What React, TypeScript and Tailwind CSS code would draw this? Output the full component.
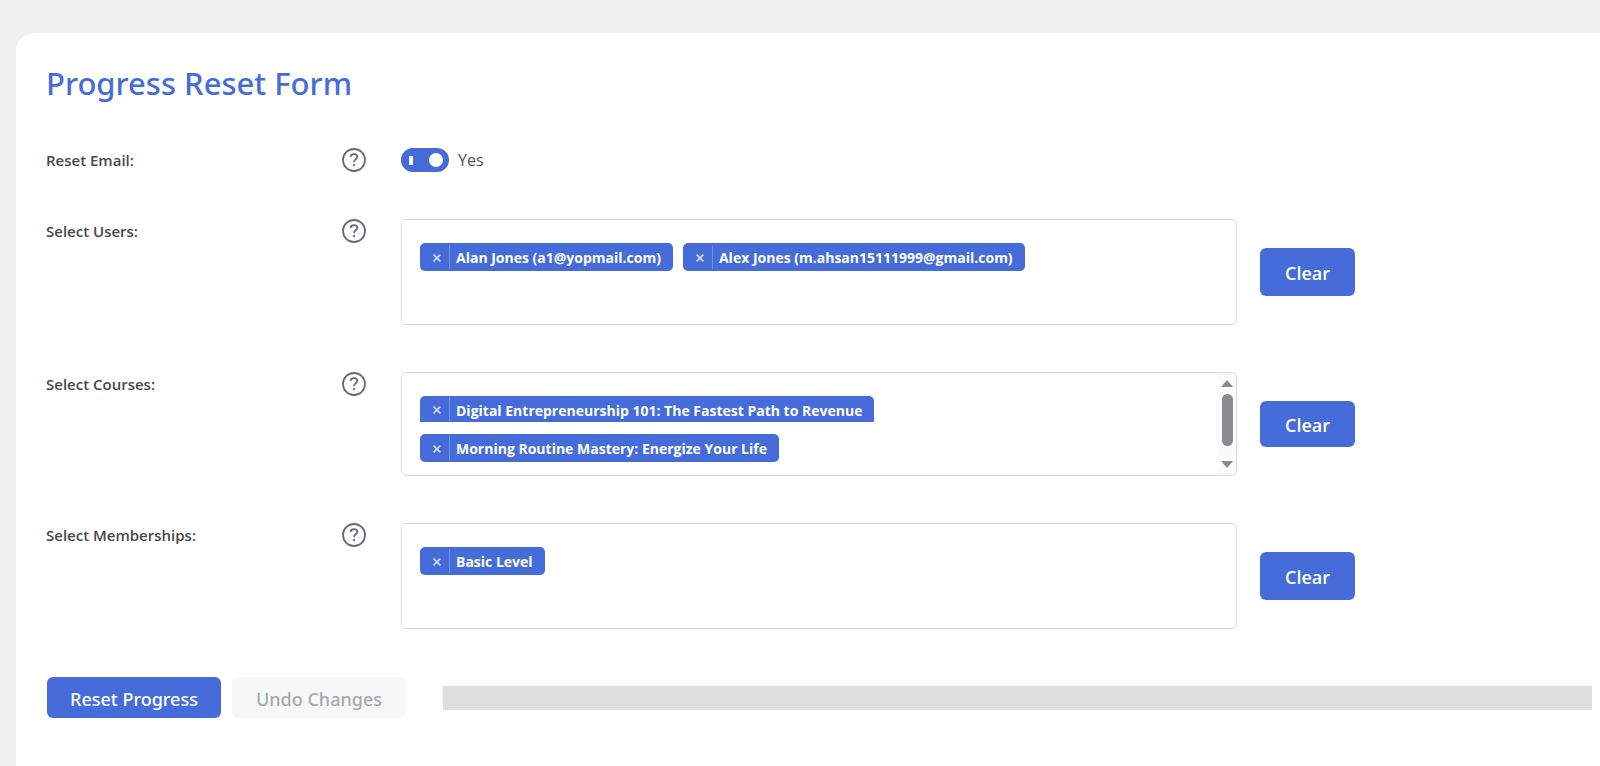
import { useState, type ReactNode } from "react";

const initialUsers = ["Alan Jones (a1@yopmail.com)", "Alex Jones (m.ahsan15111999@gmail.com)"];
const initialCourses = [
  "Digital Entrepreneurship 101: The Fastest Path to Revenue",
  "Morning Routine Mastery: Energize Your Life",
];
const initialMemberships = ["Basic Level"];

function HelpButton({ topic }: { topic: string }) {
  return (
    <button type="button" aria-label={`Help: ${topic}`} className="size-6 text-[#646b78]">
      <svg viewBox="0 0 24 24" className="size-6" fill="none" stroke="currentColor" aria-hidden="true">
        <circle cx="12" cy="12" r="11" strokeWidth="1.8" />
        <path d="M8.6 8.9c.1-1.8 1.5-2.8 3.4-2.8s3.3 1 3.3 2.7c0 1.3-.7 2-1.8 2.8-1 .7-1.5 1.3-1.5 2.6" strokeWidth="1.8" />
        <circle cx="12" cy="17.1" r="1.2" fill="currentColor" stroke="none" />
      </svg>
    </button>
  );
}

function FormRow({ label, children }: { label: string; children: ReactNode }) {
  return (
    <div className="grid grid-cols-[296px_59px_minmax(0,1fr)] items-start">
      <div id={label.replace(" ", "-")} className="text-[15px] leading-6 font-semibold text-[#484848]">
        {label}:
      </div>
      <HelpButton topic={label} />
      {children}
    </div>
  );
}

function Chip({ text, clipped, onRemove }: { text: string; clipped?: boolean; onRemove: () => void }) {
  return (
    <li
      className={`flex items-center overflow-hidden bg-[#466cda] text-white ${clipped ? "h-[26px] rounded-t-[5px]" : "h-7 rounded-[5px]"}`}
    >
      <button
        type="button"
        aria-label={`Remove ${text}`}
        onClick={onRemove}
        className="flex h-6 w-[30px] items-center justify-end border-r border-[#7391e4] pt-0.5 pr-2"
      >
        <svg viewBox="0 0 8 8" className="size-2" stroke="#d5defa" strokeWidth="1.6" aria-hidden="true">
          <path d="M.6.6 7.4 7.4M7.4.6.6 7.4" />
        </svg>
      </button>
      <span className={`pr-3 pl-[6px] text-sm leading-5 font-bold whitespace-nowrap ${clipped ? "pt-1" : "pt-0.5"}`}>{text}</span>
    </li>
  );
}

function ScrollBar() {
  return (
    <div className="flex w-[18px] shrink-0 flex-col items-center rounded-r-[5px] bg-[#fbfbfb] py-[7px]" aria-hidden="true">
      <svg viewBox="0 0 12 7" className="h-[7px] w-3 fill-[#8b8b8d]">
        <path d="M6 0 12 7H0z" />
      </svg>
      <div className="mt-[7px] h-[52px] w-[11px] rounded-full bg-[#8b8b8d]" />
      <svg viewBox="0 0 12 7" className="mt-auto h-[7px] w-3 fill-[#8b8b8d]">
        <path d="M0 0h12L6 7z" />
      </svg>
    </div>
  );
}

function TagField({ label, initial, stacked }: { label: string; initial: string[]; stacked?: boolean }) {
  const [items, setItems] = useState(initial);
  return (
    <FormRow label={label}>
      <div className="flex items-center gap-[23px]">
        <div
          className={`flex min-w-0 flex-1 rounded-[5px] border border-[#dcdcde] ${stacked ? "min-h-[104px]" : "min-h-[106px]"}`}
        >
          <ul
            aria-labelledby={label.replace(" ", "-")}
            className={`flex min-w-0 flex-1 items-start px-[18px] ${stacked ? "flex-col gap-3 pt-[23px]" : "flex-wrap content-start gap-[10px] pt-[23px]"}`}
          >
            {items.map((item, i) => (
              <Chip
                key={item}
                text={item}
                clipped={stacked && i === 0 && items.length > 1}
                onRemove={() => setItems(items.filter((other) => other !== item))}
              />
            ))}
          </ul>
          {stacked && <ScrollBar />}
        </div>
        <button
          type="button"
          onClick={() => setItems([])}
          className={`w-[95px] shrink-0 rounded-[6px] bg-[#466cda] pt-0.5 text-lg font-semibold text-white ${stacked ? "h-[46px]" : "h-12"}`}
        >
          Clear
        </button>
      </div>
    </FormRow>
  );
}

export default function App() {
  const [email, setEmail] = useState(true);
  return (
    <div className="min-h-screen bg-[#efeff0] pt-[33px] pl-4 font-['Open_Sans','Noto_Sans',sans-serif]">
      <main className="min-h-[calc(100vh-33px)] rounded-tl-[18px] bg-white pt-[26px] pr-2 pl-[30px]">
        <h1 className="font-['Noto_Sans',sans-serif] text-[31px] leading-[48px] font-medium text-[#466cda]">Progress Reset Form</h1>
        <form className="mt-[41px] flex flex-col gap-[48px]" onSubmit={(e) => e.preventDefault()}>
          <div className="flex max-w-[1309px] flex-col gap-[47px]">
            <FormRow label="Reset Email">
              <label className="flex h-6 items-center gap-[9px]">
                <input
                  type="checkbox"
                  checked={email}
                  onChange={(e) => setEmail(e.target.checked)}
                  className="peer sr-only"
                />
                <span className="flex h-6 w-12 items-center justify-between rounded-full bg-[#b8bcc4] pr-[6px] pl-2 peer-checked:bg-[#466cda]">
                  <span className="h-[9px] w-1 bg-white" />
                  <span className="size-[14px] rounded-full bg-white" />
                </span>
                <span className="text-base leading-6 text-[#505050]">{email ? "Yes" : "No"}</span>
              </label>
            </FormRow>
            <TagField label="Select Users" initial={initialUsers} />
            <TagField label="Select Courses" initial={initialCourses} stacked />
            <TagField label="Select Memberships" initial={initialMemberships} />
          </div>
          <div className="flex items-center pl-px font-['Noto_Sans',sans-serif]">
            <button type="submit" className="h-[41px] w-[174px] rounded-[6px] bg-[#466cda] pt-0.5 text-lg font-medium text-white">
              Reset Progress
            </button>
            <button type="button" disabled className="ml-[11px] h-[41px] w-[174px] rounded-[6px] bg-[#f6f7f7] pt-0.5 text-lg font-medium text-[#a7aaad]">
              Undo Changes
            </button>
            <div role="progressbar" aria-label="Reset progress" aria-valuenow={0} className="ml-[37px] h-6 flex-1 bg-[#dddddd]" />
          </div>
        </form>
      </main>
    </div>
  );
}
